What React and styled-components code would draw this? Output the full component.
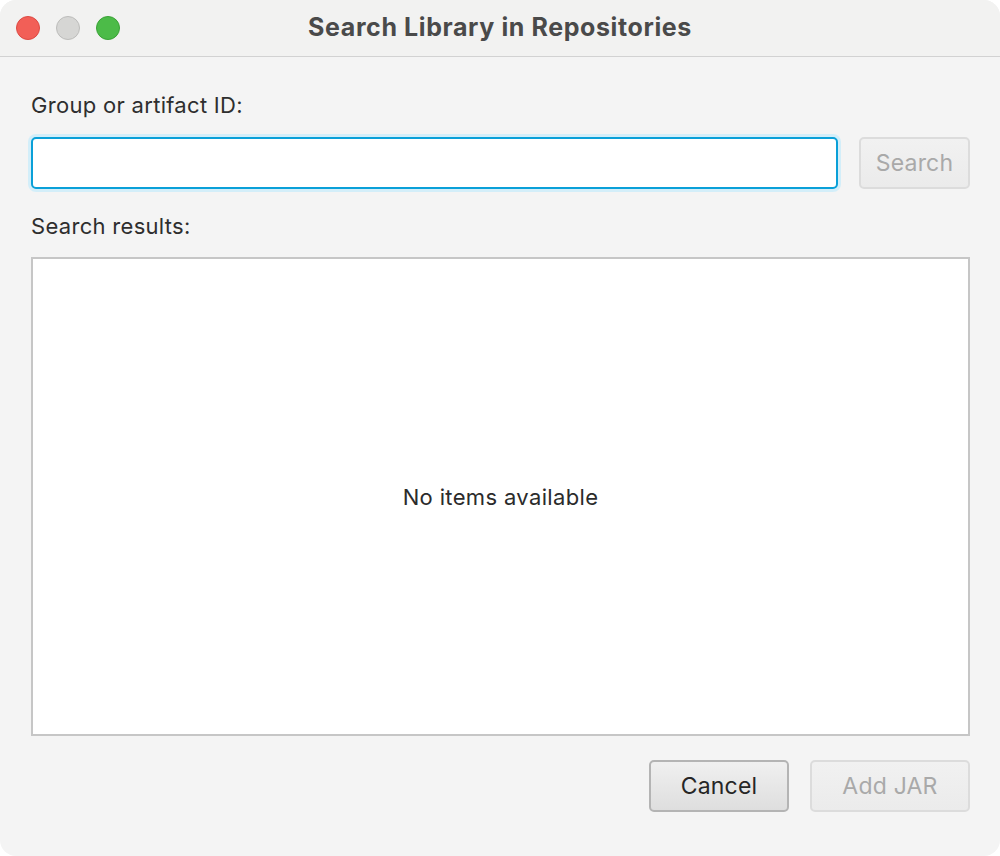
import React from 'react'
import styled, { createGlobalStyle } from 'styled-components'

const Global = createGlobalStyle`
  html, body {
    margin: 0;
    padding: 0;
    background: #ffffff;
  }
  * { box-sizing: border-box; }
`

const Window = styled.div`
  width: 1000px;
  height: 856px;
  background: #f4f4f4;
  border-radius: 16px;
  overflow: hidden;
  display: flex;
  flex-direction: column;
  font-family: Inter, "Liberation Sans", sans-serif;
  color: #2b2b2b;
`

const TitleBar = styled.div`
  height: 57px;
  background: #f2f2f1;
  border-bottom: 1px solid #d2d2d2;
  display: flex;
  align-items: center;
  position: relative;
  padding-left: 16px;
  gap: 16px;
`

const Light = styled.span`
  width: 24px;
  height: 24px;
  border-radius: 50%;
  background: ${p => p.color};
  border: 1px solid ${p => p.edge};
`

const Title = styled.div`
  position: absolute;
  left: 0;
  right: 0;
  top: 0;
  height: 56px;
  line-height: 54px;
  text-align: center;
  font-size: 25px;
  letter-spacing: 0.6px;
  font-weight: 700;
  color: #4a4a4a;
  pointer-events: none;
`

const Body = styled.div`
  flex: 1;
  display: flex;
  flex-direction: column;
  padding: 34px 30px 44px 31px;
`

const Label = styled.div`
  font-size: 22px;
  letter-spacing: 0.3px;
  line-height: 28px;
  color: #2e2e2e;
  margin-top: ${p => p.top || 0}px;
`

const SearchRow = styled.div`
  display: flex;
  align-items: center;
  gap: 21px;
  margin-top: 18px;
`

const Input = styled.div`
  flex: 1;
  height: 52px;
  background: #ffffff;
  border: 2px solid #0aa0d8;
  border-radius: 5px;
  box-shadow: 0 0 0 3px #d3eef9;
`

const Button = styled.div`
  width: ${p => p.width}px;
  height: 52px;
  display: flex;
  align-items: center;
  justify-content: center;
  font-size: 23px;
  letter-spacing: 0.2px;
  border-radius: 5px;
  color: ${p => (p.disabled ? '#a9a9a9' : '#262626')};
  border: 2px solid ${p => (p.disabled ? '#dcdcdc' : '#b4b4b4')};
  background: ${p =>
    p.disabled
      ? 'linear-gradient(#f1f1f1, #ebebeb)'
      : 'linear-gradient(#f0f0f0, #dedede)'};
`

const ResultList = styled.div`
  flex: 1;
  margin-top: 17px;
  background: #ffffff;
  border: 2px solid #c6c6c6;
  display: flex;
  align-items: center;
  justify-content: center;
  font-size: 22px;
  letter-spacing: 0.35px;
  color: #2b2b2b;
`

const Footer = styled.div`
  display: flex;
  justify-content: flex-end;
  gap: 21px;
  margin-top: 24px;
`

export default function App() {
  return (
    <>
      <Global />
      <Window>
        <TitleBar>
          <Light color="#f25f57" edge="#dc4a43" />
          <Light color="#d6d6d4" edge="#bcbcba" />
          <Light color="#4cbb48" edge="#3aa236" />
          <Title>Search Library in Repositories</Title>
        </TitleBar>
        <Body>
          <Label>Group or artifact ID:</Label>
          <SearchRow>
            <Input />
            <Button width={111} disabled>Search</Button>
          </SearchRow>
          <Label top={23}>Search results:</Label>
          <ResultList>No items available</ResultList>
          <Footer>
            <Button width={140}>Cancel</Button>
            <Button width={160} disabled>Add JAR</Button>
          </Footer>
        </Body>
      </Window>
    </>
  )
}
